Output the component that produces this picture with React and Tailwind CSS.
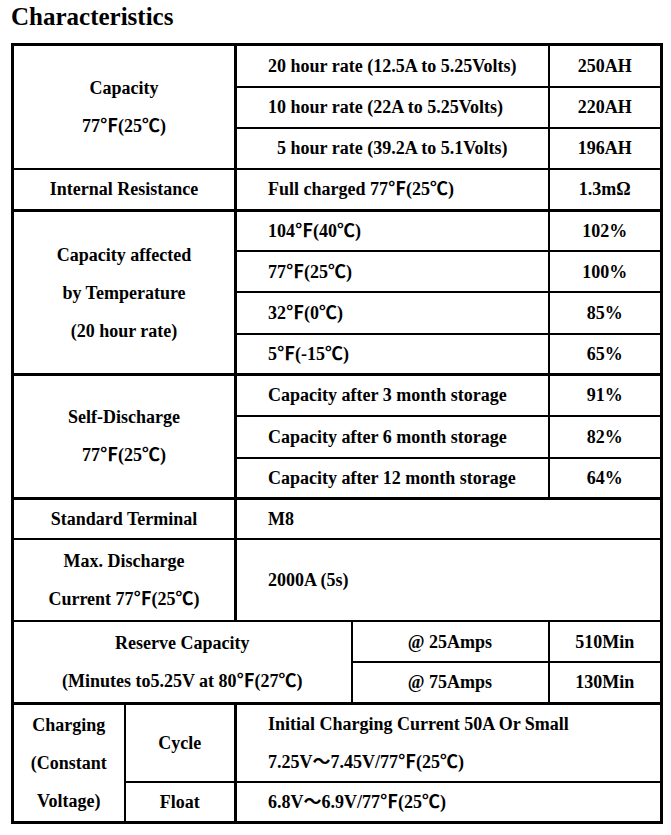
import React from "react";

const td = "border-2 border-black align-middle p-0";
const c1 = "text-center";
const c2 = "text-left pl-[31px]";
const c3 = "text-center";

export default function App() {
  return (
    <div className="bg-white w-[671px] h-[835px] pl-[11px] font-['Liberation_Serif','Noto_Sans_CJK_SC',serif] text-black">
      <h1 className="pt-[2px] text-[25px] leading-[30px] font-bold">Characteristics</h1>
      <table className="mt-[11px] w-[649px] table-fixed border-collapse border-[3px] border-black text-[18px] font-bold leading-[38px]">
        <colgroup>
          <col className="w-[112px]" />
          <col className="w-[111px]" />
          <col className="w-[116px]" />
          <col className="w-[197px]" />
          <col className="w-[113px]" />
        </colgroup>
        <tbody>
          <tr className="h-[42px]">
            <td rowSpan={3} colSpan={2} className={`${td} ${c1} border-r-[3px]`}>
              <div>Capacity</div>
              <div>77℉(25℃)</div>
            </td>
            <td colSpan={2} className={`${td} ${c2}`}>20 hour rate (12.5A to 5.25Volts)</td>
            <td className={`${td} ${c3}`}>250AH</td>
          </tr>
          <tr className="h-[41px]">
            <td colSpan={2} className={`${td} ${c2}`}>10 hour rate (22A to 5.25Volts)</td>
            <td className={`${td} ${c3}`}>220AH</td>
          </tr>
          <tr className="h-[41px]">
            <td colSpan={2} className={`${td} text-left pl-[40px]`}>5 hour rate (39.2A to 5.1Volts)</td>
            <td className={`${td} ${c3}`}>196AH</td>
          </tr>
          <tr className="h-[42px]">
            <td colSpan={2} className={`${td} ${c1} border-r-[3px]`}>Internal Resistance</td>
            <td colSpan={2} className={`${td} ${c2}`}>Full charged 77℉(25℃)</td>
            <td className={`${td} ${c3}`}>1.3mΩ</td>
          </tr>
          <tr className="h-[40px]">
            <td rowSpan={4} colSpan={2} className={`${td} ${c1} border-r-[3px] border-t-[3px]`}>
              <div>Capacity affected</div>
              <div>by Temperature</div>
              <div>(20 hour rate)</div>
            </td>
            <td colSpan={2} className={`${td} ${c2} border-t-[3px]`}>104℉(40℃)</td>
            <td className={`${td} ${c3} border-t-[3px]`}>102%</td>
          </tr>
          <tr className="h-[41px]">
            <td colSpan={2} className={`${td} ${c2}`}>77℉(25℃)</td>
            <td className={`${td} ${c3}`}>100%</td>
          </tr>
          <tr className="h-[42px]">
            <td colSpan={2} className={`${td} ${c2}`}>32℉(0℃)</td>
            <td className={`${td} ${c3}`}>85%</td>
          </tr>
          <tr className="h-[40px]">
            <td colSpan={2} className={`${td} ${c2}`}>5℉(-15℃)</td>
            <td className={`${td} ${c3}`}>65%</td>
          </tr>
          <tr className="h-[41px]">
            <td rowSpan={3} colSpan={2} className={`${td} ${c1} border-r-[3px] border-t-[3px]`}>
              <div>Self-Discharge</div>
              <div>77℉(25℃)</div>
            </td>
            <td colSpan={2} className={`${td} ${c2} border-t-[3px]`}>Capacity after 3 month storage</td>
            <td className={`${td} ${c3} border-t-[3px]`}>91%</td>
          </tr>
          <tr className="h-[42px]">
            <td colSpan={2} className={`${td} ${c2}`}>Capacity after 6 month storage</td>
            <td className={`${td} ${c3}`}>82%</td>
          </tr>
          <tr className="h-[40px]">
            <td colSpan={2} className={`${td} ${c2}`}>Capacity after 12 month storage</td>
            <td className={`${td} ${c3}`}>64%</td>
          </tr>
          <tr className="h-[41px]">
            <td colSpan={2} className={`${td} ${c1} border-r-[3px] border-t-[3px]`}>Standard Terminal</td>
            <td colSpan={3} className={`${td} ${c2} border-t-[3px]`}>M8</td>
          </tr>
          <tr className="h-[82px]">
            <td colSpan={2} className={`${td} ${c1} border-r-[3px]`}>
              <div>Max. Discharge</div>
              <div>Current 77℉(25℃)</div>
            </td>
            <td colSpan={3} className={`${td} ${c2}`}>2000A (5s)</td>
          </tr>
          <tr className="h-[41px]">
            <td rowSpan={2} colSpan={3} className={`${td} ${c1}`}>
              <div>Reserve Capacity</div>
              <div>(Minutes to5.25V at 80℉(27℃)</div>
            </td>
            <td className={`${td} ${c3}`}>@ 25Amps</td>
            <td className={`${td} ${c3}`}>510Min</td>
          </tr>
          <tr className="h-[41px]">
            <td className={`${td} ${c3}`}>@ 75Amps</td>
            <td className={`${td} ${c3}`}>130Min</td>
          </tr>
          <tr className="h-[79px]">
            <td rowSpan={2} className={`${td} ${c1} border-t-[3px]`}>
              <div>Charging</div>
              <div>(Constant</div>
              <div>Voltage)</div>
            </td>
            <td className={`${td} ${c1} border-r-[3px] border-t-[3px]`}>Cycle</td>
            <td colSpan={3} className={`${td} ${c2} border-t-[3px]`}>
              <div>Initial Charging Current 50A Or Small</div>
              <div>7.25V～7.45V/77℉(25℃)</div>
            </td>
          </tr>
          <tr className="h-[40px]">
            <td className={`${td} ${c1} border-r-[3px]`}>Float</td>
            <td colSpan={3} className={`${td} ${c2}`}>6.8V～6.9V/77℉(25℃)</td>
          </tr>
        </tbody>
      </table>
    </div>
  );
}
